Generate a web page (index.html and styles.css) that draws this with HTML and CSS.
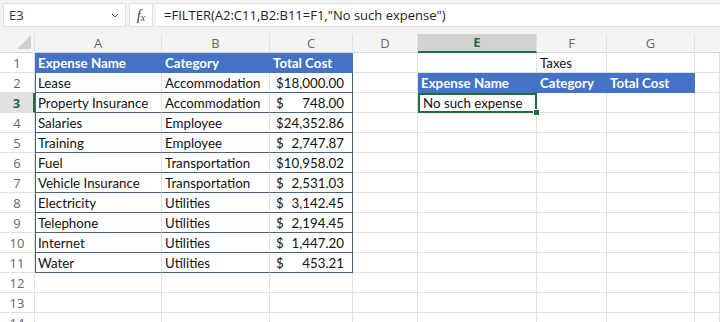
FILE: index.html
```html
<!DOCTYPE html>
<html lang="en">
<head>
  <meta charset="UTF-8">
  <title>FILTER - No such expense</title>
  <link rel="stylesheet" href="styles.css">
</head>
<body>
  <div class="toolbar">
    <div class="namebox">
      <span>E3</span>
      <svg class="chev" width="8" height="5" viewBox="0 0 8 5"><path d="M1 1l3 3 3-3" fill="none" stroke="#555" stroke-width="1"/></svg>
    </div>
    <div class="fxbox"><span class="fx">f<sub>x</sub></span></div>
    <div class="formula">=FILTER(A2:C11,B2:B11=F1,"No such expense")</div>
  </div>

  <div class="sheet">
    <div class="hd corner"><span class="tri"></span></div>
    <div class="hd">A</div>
    <div class="hd">B</div>
    <div class="hd">C</div>
    <div class="hd">D</div>
    <div class="hd sel">E</div>
    <div class="hd">F</div>
    <div class="hd">G</div>
    <div class="hd last"></div>

    <div class="rh">1</div>
    <div class="c th">Expense Name</div>
    <div class="c th">Category</div>
    <div class="c th">Total Cost</div>
    <div class="c"></div>
    <div class="c"></div>
    <div class="c">Taxes</div>
    <div class="c"></div>
    <div class="c"></div>

    <div class="rh">2</div>
    <div class="c t tl">Lease</div>
    <div class="c t">Accommodation</div>
    <div class="c t tr money"><span>$</span><span>18,000.00</span></div>
    <div class="c"></div>
    <div class="c th">Expense Name</div>
    <div class="c th">Category</div>
    <div class="c th">Total Cost</div>
    <div class="c"></div>

    <div class="rh rsel">3</div>
    <div class="c t tl">Property Insurance</div>
    <div class="c t">Accommodation</div>
    <div class="c t tr money"><span>$</span><span>748.00</span></div>
    <div class="c"></div>
    <div class="c active">No such expense<span class="handle"></span></div>
    <div class="c"></div>
    <div class="c"></div>
    <div class="c"></div>

    <div class="rh">4</div>
    <div class="c t tl">Salaries</div>
    <div class="c t">Employee</div>
    <div class="c t tr money"><span>$</span><span>24,352.86</span></div>
    <div class="c"></div><div class="c"></div><div class="c"></div><div class="c"></div><div class="c"></div>

    <div class="rh">5</div>
    <div class="c t tl">Training</div>
    <div class="c t">Employee</div>
    <div class="c t tr money"><span>$</span><span>2,747.87</span></div>
    <div class="c"></div><div class="c"></div><div class="c"></div><div class="c"></div><div class="c"></div>

    <div class="rh">6</div>
    <div class="c t tl">Fuel</div>
    <div class="c t">Transportation</div>
    <div class="c t tr money"><span>$</span><span>10,958.02</span></div>
    <div class="c"></div><div class="c"></div><div class="c"></div><div class="c"></div><div class="c"></div>

    <div class="rh">7</div>
    <div class="c t tl">Vehicle Insurance</div>
    <div class="c t">Transportation</div>
    <div class="c t tr money"><span>$</span><span>2,531.03</span></div>
    <div class="c"></div><div class="c"></div><div class="c"></div><div class="c"></div><div class="c"></div>

    <div class="rh">8</div>
    <div class="c t tl">Electricity</div>
    <div class="c t">Utilities</div>
    <div class="c t tr money"><span>$</span><span>3,142.45</span></div>
    <div class="c"></div><div class="c"></div><div class="c"></div><div class="c"></div><div class="c"></div>

    <div class="rh">9</div>
    <div class="c t tl">Telephone</div>
    <div class="c t">Utilities</div>
    <div class="c t tr money"><span>$</span><span>2,194.45</span></div>
    <div class="c"></div><div class="c"></div><div class="c"></div><div class="c"></div><div class="c"></div>

    <div class="rh">10</div>
    <div class="c t tl">Internet</div>
    <div class="c t">Utilities</div>
    <div class="c t tr money"><span>$</span><span>1,447.20</span></div>
    <div class="c"></div><div class="c"></div><div class="c"></div><div class="c"></div><div class="c"></div>

    <div class="rh">11</div>
    <div class="c t tl">Water</div>
    <div class="c t">Utilities</div>
    <div class="c t tr money"><span>$</span><span>453.21</span></div>
    <div class="c"></div><div class="c"></div><div class="c"></div><div class="c"></div><div class="c"></div>

    <div class="rh">12</div>
    <div class="c"></div><div class="c"></div><div class="c"></div><div class="c"></div><div class="c"></div><div class="c"></div><div class="c"></div><div class="c"></div>

    <div class="rh">13</div>
    <div class="c"></div><div class="c"></div><div class="c"></div><div class="c"></div><div class="c"></div><div class="c"></div><div class="c"></div><div class="c"></div>

    <div class="rh">14</div>
    <div class="c"></div><div class="c"></div><div class="c"></div><div class="c"></div><div class="c"></div><div class="c"></div><div class="c"></div><div class="c"></div>
  </div>
</body>
</html>
```

FILE: styles.css
```css
body { margin: 0; background: #fff; font-family: "Open Sans", "Liberation Sans", sans-serif; overflow: hidden; }

.toolbar { display: flex; gap: 3px; padding: 3px 0 7px 3px; background: #f3f3f3; height: 24px; }
.namebox { width: 123px; box-sizing: border-box; background: #fff; border: 1px solid #e1e1e1; display: flex; align-items: center; justify-content: space-between; padding: 0 6px 0 5px; font-size: 13px; color: #333; }
.chev { margin-top: 1px; }
.fxbox { width: 24px; box-sizing: border-box; background: #fff; border: 1px solid #e1e1e1; display: flex; align-items: center; justify-content: center; }
.fx { font-family: "Liberation Serif", serif; font-style: italic; font-size: 15px; color: #444; line-height: 1; }
.fx sub { font-size: 10px; vertical-align: -1px; }
.formula { flex: 1; background: #fff; border-top: 1px solid #e1e1e1; border-bottom: 1px solid #e1e1e1; padding-left: 8px; font-size: 13px; color: #222; line-height: 22px; white-space: nowrap; }

.sheet { display: grid; grid-template-columns: 35px 127px 108px 83px 65px 119px 70px 88px 1fr; grid-template-rows: 19px repeat(14, 20px); }
.sheet > div { box-sizing: border-box; border-right: 1px solid #e1e1e1; border-bottom: 1px solid #e1e1e1; white-space: nowrap; overflow: visible; }

.hd { background: #f5f5f5; color: #666; font-size: 13px; text-align: center; line-height: 18px; border-bottom-color: #d4d4d4 !important; }
.hd.last { border-right: none !important; }
.hd.sel { background: #d2d2d2; color: #1e6e42; font-weight: bold; border-bottom: 2px solid #1e6e42 !important; line-height: 17px; }
.corner { position: relative; background: #f5f5f5; }
.tri { position: absolute; right: 3px; bottom: 3px; width: 0; height: 0; border-left: 14px solid transparent; border-bottom: 14px solid #d0d0d0; }

.rh { background: #fff; color: #666; font-size: 13px; text-align: center; line-height: 20px; }
.rh.rsel { color: #1e6e42; font-weight: bold; background: #e1e1e1; border-right: 2px solid #1e6e42 !important; }

.c { font-family: Lato, "Liberation Sans", sans-serif; font-size: 13.3px; color: #111; padding: 0 3px; line-height: 20px; }
.c.th { background: #4472c4; color: #fff; font-weight: bold; border-color: #4472c4 !important; }
.c.t { border-bottom-color: #4a6578 !important; }
.c.tl { border-left: 1px solid #4a6578; padding-left: 2px; }
.c.tr { border-right-color: #4a6578 !important; }
.money { display: flex; justify-content: space-between; padding: 0 8px 0 6px; }

.c.active { position: relative; border: 2px solid #1e6e42 !important; line-height: 17px; padding-left: 3px; }
.handle { position: absolute; right: -5px; bottom: -5px; width: 5px; height: 5px; background: #1e6e42; border: 1px solid #fff; }
```
